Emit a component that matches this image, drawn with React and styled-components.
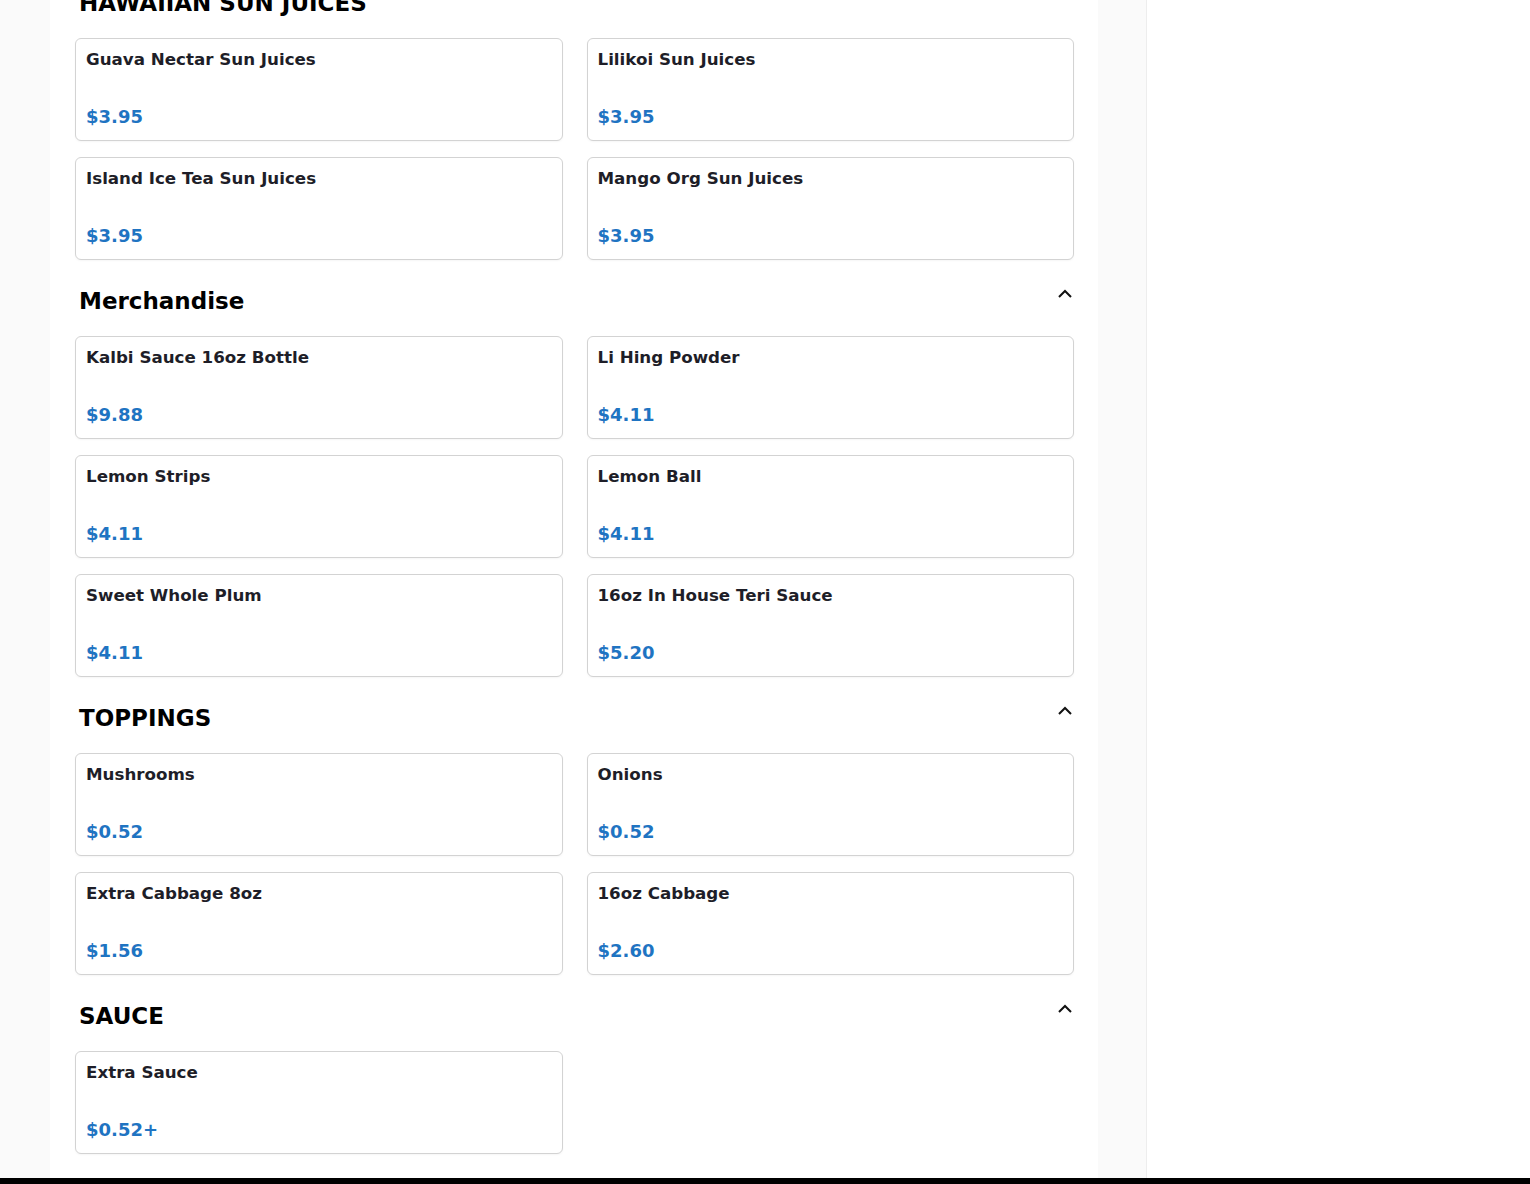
import React from 'react';
import styled, { createGlobalStyle } from 'styled-components';

const sections = [
  {
    title: 'HAWAIIAN SUN JUICES',
    items: [
      { name: 'Guava Nectar Sun Juices', price: '$3.95' },
      { name: 'Lilikoi Sun Juices', price: '$3.95' },
      { name: 'Island Ice Tea Sun Juices', price: '$3.95' },
      { name: 'Mango Org Sun Juices', price: '$3.95' },
    ],
  },
  {
    title: 'Merchandise',
    items: [
      { name: 'Kalbi Sauce 16oz Bottle', price: '$9.88' },
      { name: 'Li Hing Powder', price: '$4.11' },
      { name: 'Lemon Strips', price: '$4.11' },
      { name: 'Lemon Ball', price: '$4.11' },
      { name: 'Sweet Whole Plum', price: '$4.11' },
      { name: '16oz In House Teri Sauce', price: '$5.20' },
    ],
  },
  {
    title: 'TOPPINGS',
    items: [
      { name: 'Mushrooms', price: '$0.52' },
      { name: 'Onions', price: '$0.52' },
      { name: 'Extra Cabbage 8oz', price: '$1.56' },
      { name: '16oz Cabbage', price: '$2.60' },
    ],
  },
  {
    title: 'SAUCE',
    items: [{ name: 'Extra Sauce', price: '$0.52+' }],
  },
];

function Chevron() {
  return (
    <ChevronIcon viewBox="0 0 16 16" width="16" height="16">
      <path d="M2 11 L8 5 L14 11" fill="none" stroke="#111" strokeWidth="2" />
    </ChevronIcon>
  );
}

function App() {
  return (
    <>
      <GlobalStyle />
      <Page>
        <Main>
          <Panel>
            <MenuList>
              {sections.map((section) => (
                <Section key={section.title}>
                  <SectionHeader>
                    <SectionTitle>{section.title}</SectionTitle>
                    <Chevron />
                  </SectionHeader>
                  <Grid>
                    {section.items.map((item) => (
                      <Card key={item.name}>
                        <ItemName>{item.name}</ItemName>
                        <Price>{item.price}</Price>
                      </Card>
                    ))}
                  </Grid>
                </Section>
              ))}
            </MenuList>
          </Panel>
        </Main>
        <Sidebar />
      </Page>
      <BottomBar />
    </>
  );
}

const GlobalStyle = createGlobalStyle`
  html, body {
    margin: 0;
    padding: 0;
    background: #fafafa;
    font-family: "DejaVu Sans", Verdana, sans-serif;
  }
  * {
    box-sizing: border-box;
  }
`;

const Page = styled.div`
  display: flex;
  min-height: 100vh;
`;

const Main = styled.main`
  flex: 1;
  background: #fafafa;
  padding: 0 48px 0 50px;
`;

const Panel = styled.div`
  background: #ffffff;
  padding: 0 24px 60px 25px;
  min-height: 100vh;
  overflow: hidden;
`;

const MenuList = styled.div`
  margin-top: -38px;
`;

const Section = styled.section`
  padding-top: 25px;
`;

const SectionHeader = styled.div`
  display: flex;
  justify-content: space-between;
  align-items: flex-start;
  margin-bottom: 19px;
`;

const SectionTitle = styled.h2`
  margin: 0;
  padding-left: 4px;
  font-size: 23px;
  line-height: 32px;
  font-weight: 700;
  color: #000000;
`;

const ChevronIcon = styled.svg`
  display: block;
  margin-top: 1px;
  margin-right: 1px;
  flex-shrink: 0;
`;

const Grid = styled.div`
  display: grid;
  grid-template-columns: 1fr 1fr;
  column-gap: 24px;
  row-gap: 16px;
`;

const Card = styled.div`
  display: flex;
  flex-direction: column;
  justify-content: space-between;
  height: 103px;
  padding: 10px 10px 12px 10px;
  border: 1px solid #d3d3d3;
  border-radius: 6px;
  background: #ffffff;
  box-shadow: 0 1px 2px rgba(0, 0, 0, 0.04);
`;

const ItemName = styled.div`
  font-size: 16.7px;
  line-height: 21px;
  font-weight: 700;
  color: #1e1e28;
`;

const Price = styled.div`
  font-size: 18px;
  line-height: 22px;
  font-weight: 700;
  color: #1f74c2;
`;

const Sidebar = styled.aside`
  width: 384px;
  flex-shrink: 0;
  height: 100vh;
  position: sticky;
  top: 0;
  background: #ffffff;
  border-left: 1px solid #ededed;
`;

const BottomBar = styled.div`
  position: fixed;
  left: 0;
  right: 0;
  bottom: 0;
  height: 6px;
  background: #000000;
`;

export default App;
